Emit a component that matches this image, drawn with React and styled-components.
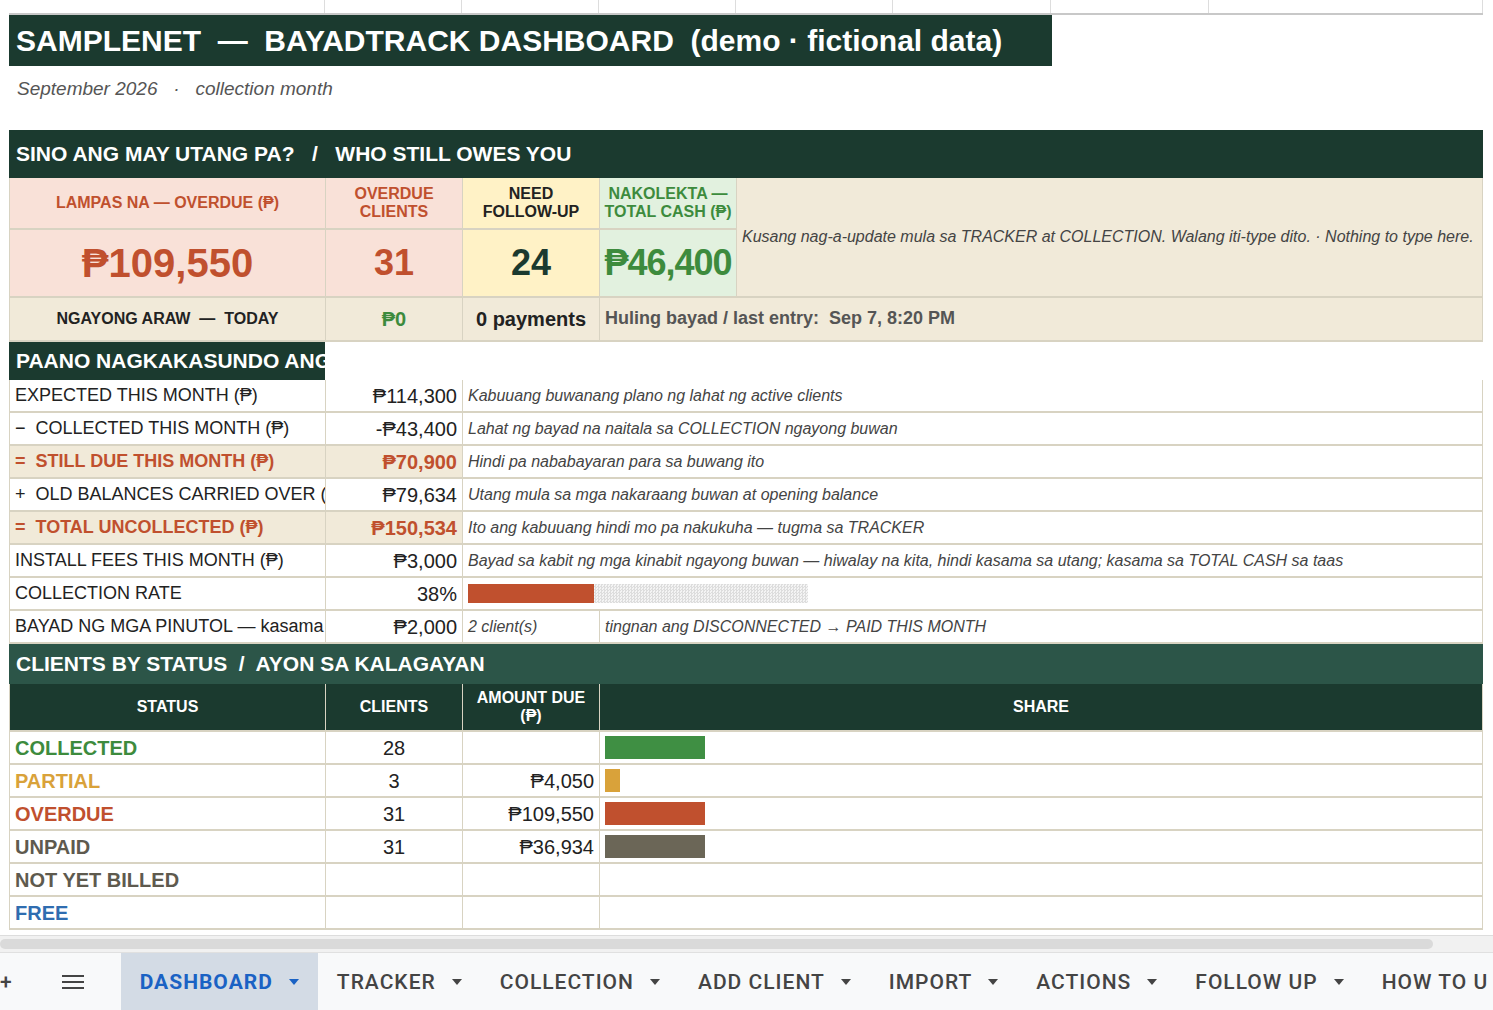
import styled, { createGlobalStyle } from "styled-components"

const Global = createGlobalStyle`
  body { margin: 0; font-family: "Liberation Sans", Roboto, "DejaVu Sans", sans-serif; background: #fff; overflow: hidden; }
`

const COLS = "316px 137px 137px 137px 1fr"
const DARK = "#1b3a2f"
const RED = "#c0502e"
const GREEN = "#3d8b3d"

const Page = styled.div`
  width: 1493px; height: 1010px; display: flex; flex-direction: column; overflow: hidden;
`
const Sheet = styled.div`
  flex: 1; padding-left: 9px; padding-right: 10px; display: flex; flex-direction: column;
`
const TopStrip = styled.div`
  height: 13px; border-bottom: 2px solid #c8c8c8; display: grid; grid-template-columns: 316px 137px 137px 137px 157px 158px 158px 1fr;
  & > div { border-right: 1px solid #ddd; }
`
const Title = styled.div`
  width: 1043px; height: 51px; background: ${DARK}; color: #fff; font-weight: 700; font-size: 30px;
  display: flex; align-items: center; padding-left: 7px; box-sizing: border-box; white-space: pre;
`
const Sub = styled.div`
  height: 46px; display: flex; align-items: center; padding-left: 8px; font-style: italic; color: #555; font-size: 19px; white-space: pre;
`
const Section = styled.div`
  height: ${p => p.$h}px; background: ${p => p.$bg || DARK}; color: #fff; font-weight: 700; font-size: 21px;
  display: flex; align-items: center; padding-left: 7px; width: ${p => p.$w || "auto"}; box-sizing: border-box;
  margin-top: ${p => p.$mt || 0}px; white-space: pre; overflow: hidden;
`
const Grid = styled.div`
  display: grid; grid-template-columns: ${COLS}; grid-auto-rows: ${p => p.$rows};
  border-left: 1px solid #d8d3c2;
`
const Cell = styled.div`
  background: ${p => p.$bg || "#fff"}; color: ${p => p.$c || "#222"};
  border-right: 1px solid #d8d3c2; border-bottom: 2px solid #d8d3c2;
  display: flex; align-items: center; justify-content: ${p => p.$j || "flex-start"};
  text-align: ${p => (p.$j === "center" ? "center" : "left")};
  font-size: ${p => p.$fs || 18}px; font-weight: ${p => (p.$b ? 700 : 400)};
  font-style: ${p => (p.$i ? "italic" : "normal")};
  padding: 0 5px; overflow: hidden; white-space: pre; box-sizing: border-box; line-height: 1.1;
  grid-row: ${p => p.$row || "auto"}; grid-column: ${p => p.$col || "auto"};
`
const Bar = styled.div`
  height: ${p => p.$h || 20}px; width: ${p => p.$w}px; background: ${p => p.$c};
`
const Track = styled.div`
  display: flex; width: 340px; height: 19px;
  background: repeating-conic-gradient(#ddd 0 25%, #f4f4f4 0 50%) 0 0 / 3px 3px;
`
const Scroll = styled.div`
  height: 16px; background: #f1f1f1; border-top: 1px solid #ddd; position: relative;
  &::after { content: ""; position: absolute; left: 0; top: 3px; width: 1433px; height: 10px; background: #dadada; border-radius: 5px; }
`
const Tabs = styled.div`
  height: 57px; background: #f8f9fa; border-top: 1px solid #e0e0e0; display: flex; align-items: stretch;
  font-size: 21px; letter-spacing: 1px; color: #444; font-family: Roboto, sans-serif;
`
const Tab = styled.div`
  display: flex; align-items: center; gap: 16px; padding: 0 19px;
  background: ${p => (p.$on ? "#d3dbe5" : "transparent")}; color: ${p => (p.$on ? "#1a62c4" : "#444")};
  font-weight: ${p => (p.$on ? 700 : 500)}; white-space: nowrap;
`
const Caret = styled.span`
  width: 0; height: 0; border-left: 5px solid transparent; border-right: 5px solid transparent;
  border-top: 6px solid currentColor;
`

const tabs = ["TRACKER", "COLLECTION", "ADD CLIENT", "IMPORT", "ACTIONS", "FOLLOW UP", "HOW TO U"]

const recon = [
  ["EXPECTED THIS MONTH (₱)", "₱114,300", "Kabuuang buwanang plano ng lahat ng active clients"],
  ["−  COLLECTED THIS MONTH (₱)", "-₱43,400", "Lahat ng bayad na naitala sa COLLECTION ngayong buwan"],
  ["=  STILL DUE THIS MONTH (₱)", "₱70,900", "Hindi pa nababayaran para sa buwang ito", true],
  ["+  OLD BALANCES CARRIED OVER (", "₱79,634", "Utang mula sa mga nakaraang buwan at opening balance"],
  ["=  TOTAL UNCOLLECTED (₱)", "₱150,534", "Ito ang kabuuang hindi mo pa nakukuha — tugma sa TRACKER", true],
  ["INSTALL FEES THIS MONTH (₱)", "₱3,000", "Bayad sa kabit ng mga kinabit ngayong buwan — hiwalay na kita, hindi kasama sa utang; kasama sa TOTAL CASH sa taas"],
]

const statuses = [
  ["COLLECTED", GREEN, "28", "", 100, "#3f8f43"],
  ["PARTIAL", "#d9a23a", "3", "₱4,050", 15, "#d9a23a"],
  ["OVERDUE", RED, "31", "₱109,550", 100, RED],
  ["UNPAID", "#5e5a4e", "31", "₱36,934", 100, "#6b6657"],
  ["NOT YET BILLED", "#5e5a4e", "", "", 0],
  ["FREE", "#2f6db0", "", "", 0],
]

export default function App() {
  const pink = "#f9e1d8", yellow = "#fff2c6", mint = "#e2f1df", beige = "#f1ead9"
  return (
    <Page>
      <Global />
      <Sheet>
        <TopStrip>{Array.from({ length: 8 }, (_, i) => <div key={i} />)}</TopStrip>
        <Title>{"SAMPLENET  —  BAYADTRACK DASHBOARD  (demo · fictional data)"}</Title>
        <Sub>{"September 2026   ·   collection month"}</Sub>
        <Section $h={48} $mt={18}>{"SINO ANG MAY UTANG PA?   /   WHO STILL OWES YOU"}</Section>
        <Grid $rows="52px 68px 44px">
          <Cell $bg={pink} $c={RED} $j="center" $fs={16} $b>LAMPAS NA — OVERDUE (₱)</Cell>
          <Cell $bg={pink} $c={RED} $j="center" $fs={16} $b>{"OVERDUE\nCLIENTS"}</Cell>
          <Cell $bg={yellow} $j="center" $fs={16} $b>{"NEED\nFOLLOW-UP"}</Cell>
          <Cell $bg={mint} $c={GREEN} $j="center" $fs={16} $b>{"NAKOLEKTA —\nTOTAL CASH (₱)"}</Cell>
          <Cell $bg={beige} $row="1 / 3" $col="5" $i $fs={16} $c="#444">Kusang nag-a-update mula sa TRACKER at COLLECTION. Walang iti-type dito. · Nothing to type here.</Cell>
          <Cell $bg={pink} $c={RED} $j="center" $fs={40} $b>₱109,550</Cell>
          <Cell $bg={pink} $c={RED} $j="center" $fs={36} $b>31</Cell>
          <Cell $bg={yellow} $c={DARK} $j="center" $fs={36} $b>24</Cell>
          <Cell $bg={mint} $c={GREEN} $j="center" $fs={36} $b style={{ padding: 0, letterSpacing: "-1px" }}>₱46,400</Cell>
          <Cell $bg={beige} $j="center" $fs={16} $b>{"NGAYONG ARAW  —  TODAY"}</Cell>
          <Cell $bg={beige} $c={GREEN} $j="center" $fs={20} $b>₱0</Cell>
          <Cell $bg={beige} $j="center" $fs={20} $b>0 payments</Cell>
          <Cell $bg={beige} $col="4 / 6" $fs={18} $b $c="#555">{"Huling bayad / last entry:  Sep 7, 8:20 PM"}</Cell>
        </Grid>
        <Section $h={38} $w="316px">PAANO NAGKAKASUNDO ANG MGA NUMERO</Section>
        <Grid $rows="33px">
          {recon.map(([a, b, c, hl]) => [
            <Cell key={a} $bg={hl ? beige : "#fff"} $c={hl ? RED : "#222"} $b={hl}>{a}</Cell>,
            <Cell key={a + "b"} $bg={hl ? beige : "#fff"} $c={hl ? RED : "#222"} $b={hl} $j="flex-end" $fs={20}>{b}</Cell>,
            <Cell key={a + "c"} $col="3 / 6" $i $fs={16} $c="#444">{c}</Cell>,
          ])}
          <Cell>COLLECTION RATE</Cell>
          <Cell $j="flex-end" $fs={20}>38%</Cell>
          <Cell $col="3 / 6"><Track><Bar $w={126} $h={19} $c={RED} /></Track></Cell>
          <Cell>BAYAD NG MGA PINUTOL — kasama</Cell>
          <Cell $j="flex-end" $fs={20}>₱2,000</Cell>
          <Cell $i $fs={16} $c="#444">2 client(s)</Cell>
          <Cell $col="4 / 6" $i $fs={16} $c="#444">tingnan ang DISCONNECTED → PAID THIS MONTH</Cell>
        </Grid>
        <Section $h={40} $bg="#2c5548">{"CLIENTS BY STATUS  /  AYON SA KALAGAYAN"}</Section>
        <Grid $rows="33px" style={{ gridTemplateRows: "48px" }}>
          <Cell $bg={DARK} $c="#fff" $b $j="center" $fs={16}>STATUS</Cell>
          <Cell $bg={DARK} $c="#fff" $b $j="center" $fs={16}>CLIENTS</Cell>
          <Cell $bg={DARK} $c="#fff" $b $j="center" $fs={16}>{"AMOUNT DUE\n(₱)"}</Cell>
          <Cell $bg={DARK} $c="#fff" $b $j="center" $fs={16} $col="4 / 6">SHARE</Cell>
          {statuses.map(([s, c, n, amt, w, bc]) => [
            <Cell key={s} $c={c} $b $fs={20}>{s}</Cell>,
            <Cell key={s + "n"} $j="center" $fs={20}>{n}</Cell>,
            <Cell key={s + "a"} $j="flex-end" $fs={20}>{amt}</Cell>,
            <Cell key={s + "w"} $col="4 / 6">{w > 0 && <Bar $w={w} $h={23} $c={bc} />}</Cell>,
          ])}
        </Grid>
      </Sheet>
      <Scroll />
      <Tabs>
        <Tab style={{ padding: "0 8px 0 0" }}>+</Tab>
        <Tab style={{ padding: "0 36px 0 40px" }}>
          <svg width="24" height="18" viewBox="0 0 24 18"><path d="M1 3h22M1 9h22M1 15h22" stroke="#444" strokeWidth="2" /></svg>
        </Tab>
        <Tab $on>DASHBOARD <Caret /></Tab>
        {tabs.map(t => <Tab key={t}>{t} {t !== "HOW TO U" && <Caret />}</Tab>)}
      </Tabs>
    </Page>
  )
}
